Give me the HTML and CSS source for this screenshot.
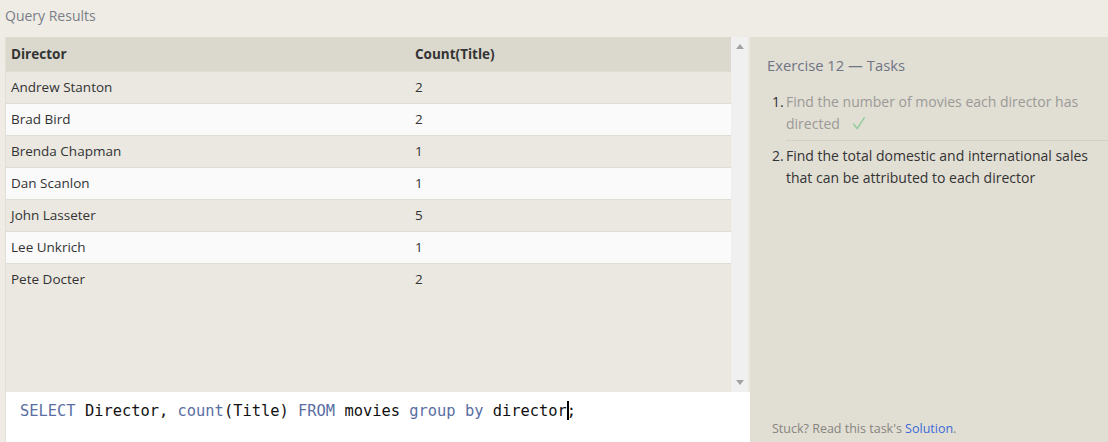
FILE: index.html
```html
<!DOCTYPE html>
<html>
<head>
<meta charset="utf-8">
<link rel="stylesheet" href="styles.css">
</head>
<body>
<div class="title">Query Results</div>
<div class="main">
  <div class="left">
    <div class="results">
      <div class="table">
        <div class="row head"><div class="cell c1">Director</div><div class="cell">Count(Title)</div></div>
        <div class="row odd"><div class="cell c1">Andrew Stanton</div><div class="cell">2</div></div>
        <div class="row even"><div class="cell c1">Brad Bird</div><div class="cell">2</div></div>
        <div class="row odd"><div class="cell c1">Brenda Chapman</div><div class="cell">1</div></div>
        <div class="row even"><div class="cell c1">Dan Scanlon</div><div class="cell">1</div></div>
        <div class="row odd"><div class="cell c1">John Lasseter</div><div class="cell">5</div></div>
        <div class="row even"><div class="cell c1">Lee Unkrich</div><div class="cell">1</div></div>
        <div class="row odd"><div class="cell c1">Pete Docter</div><div class="cell">2</div></div>
      </div>
      <div class="scrollbar">
        <svg class="arrow" width="8" height="5" viewBox="0 0 8 5"><path d="M0 5 L4 0 L8 5 Z" fill="#a3a3a3"/></svg>
        <svg class="arrow" width="8" height="5" viewBox="0 0 8 5"><path d="M0 0 L4 5 L8 0 Z" fill="#a3a3a3"/></svg>
      </div>
    </div>
    <div class="editor"><span class="kw">SELECT</span> Director, <span class="kw">count</span>(Title) <span class="kw">FROM</span> movies <span class="kw">group</span> <span class="kw">by</span> director<span class="caret"></span>;</div>
  </div>
  <div class="right">
    <div class="ex-title">Exercise 12 — Tasks</div>
    <ol class="tasks">
      <li class="task done"><span class="num">1.</span><span class="text">Find the number of movies each director has directed<svg class="check" width="12" height="13" viewBox="0 0 12 13"><path d="M0.8 7.2 L4.2 11.6 L11.2 0.8" fill="none" stroke="#90cc98" stroke-width="1.4" stroke-linecap="round" stroke-linejoin="round"/></svg></span></li>
      <li class="task"><span class="num">2.</span><span class="text">Find the total domestic and international sales that can be attributed to each director</span></li>
    </ol>
    <div class="stuck">Stuck? Read this task's <span class="link">Solution</span>.</div>
  </div>
</div>
</body>
</html>
```
FILE: styles.css
```css
* { box-sizing: border-box; }
html, body { margin: 0; padding: 0; }
body {
  width: 1108px;
  height: 442px;
  overflow: hidden;
  background: #efece5;
  font-family: "Open Sans", "Noto Sans", sans-serif;
  color: #333;
}
.title {
  height: 37px;
  padding: 5px 0 0 5px;
  font-size: 14px;
  line-height: 22px;
  color: #7b7e89;
}
.main {
  display: flex;
  height: 405px;
}
.left {
  width: 745px;
  margin-left: 5px;
  border-left: 1px solid #e2dfd8;
  display: flex;
  flex-direction: column;
}
.results {
  display: flex;
  height: 355px;
  background: #eae8e1;
}
.table {
  flex: 1;
}
.row {
  display: grid;
  grid-template-columns: 404px 1fr;
  height: 32px;
  align-items: start;
  padding-top: 5px;
  line-height: 20px;
  font-size: 13.5px;
  border-top: 1px solid #dfddd5;
}
.row.head {
  height: 34px;
  border-top: none;
  background: #dbd9ce;
  font-weight: 700;
  padding-top: 7px;
}
.row.odd { background: #eae8e1; }
.row.even { background: #fafafa; }
.cell { padding-left: 5px; }
.scrollbar {
  width: 17px;
  background: #f0f0f0;
  display: flex;
  flex-direction: column;
  justify-content: space-between;
  align-items: center;
  padding: 7px 0 7px 0;
  margin-right: 2px;
}
.editor {
  height: 50px;
  background: #fff;
  padding: 7px 0 0 14px;
  font-family: "DejaVu Sans Mono", "Liberation Mono", monospace;
  font-size: 15.4px;
  line-height: 24px;
  color: #111;
  white-space: pre;
}
.kw { color: #5a6ea3; }
.caret {
  display: inline-block;
  width: 0;
  height: 19px;
  border-left: 2px solid #000;
  vertical-align: -4px;
  margin-right: -2px;
}
.right {
  flex: 1;
  background: #e1ded4;
  display: flex;
  flex-direction: column;
  padding: 17px 0 0 0;
}
.ex-title {
  padding-left: 17px;
  font-size: 14.8px;
  line-height: 22px;
  color: #6f7584;
}
.tasks {
  list-style: none;
  margin: 15px 0 0 0;
  padding: 0 0 0 22px;
}
.task {
  display: flex;
  font-size: 14px;
  line-height: 22px;
  color: #333;
}
.num { width: 14px; flex: none; color: #333; }
.text { flex: 1; padding-right: 12px; }
.task.done .text {
  color: #9b9a96;
  border-bottom: 1px solid #d2cfc5;
  padding-bottom: 5px;
  margin-bottom: 4px;
}
.check {
  margin-left: 13px;
  vertical-align: -1px;
}
.stuck {
  margin-top: auto;
  padding: 0 0 4px 22px;
  font-size: 12.5px;
  line-height: 18px;
  color: #86857f;
}
.link { color: #3d6bd6; }
```
